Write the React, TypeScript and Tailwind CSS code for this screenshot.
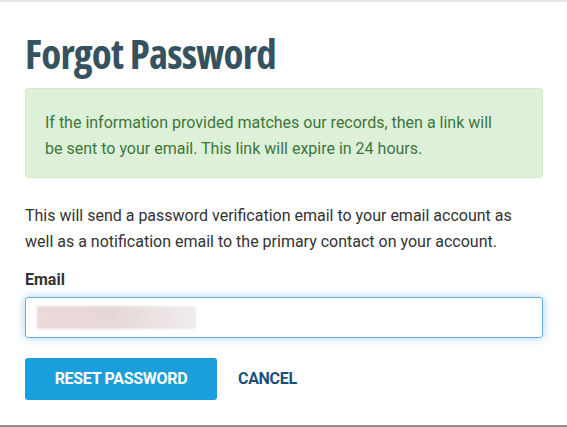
export default function App() {
  return (
    <div className="w-[567px] h-[427px] bg-white border-t-2 border-t-[#e3e5e6] border-b-2 border-b-[#8f8f8f] pl-[25px] pr-[24px] font-['Roboto',sans-serif]">
      <h1 className="mt-[27px] text-[41px] leading-[48px] font-bold tracking-[-0.8px] text-[#36525f] font-['Open_Sans',sans-serif] font-stretch-condensed">
        Forgot Password
      </h1>

      <div className="mt-[11px] h-[90px] rounded-[3px] border border-[#d3e8c5] bg-[#dff0d8] pl-[19px] pr-[30px] pt-[21px]">
        <p className="text-[16px] leading-[26px] text-[#3c763d]">
          If the information provided matches our records, then a link will be sent to your email. This link will expire in 24 hours.
        </p>
      </div>

      <p className="mt-[25px] pr-[10px] text-[16px] leading-[26px] text-[#333333]">
        This will send a password verification email to your email account as well as a notification email to the primary contact on your account.
      </p>

      <label className="block mt-[13px] text-[16px] leading-[24px] font-bold text-[#333333]">Email</label>

      <div className="mt-[5px] h-[41px] rounded-[3px] border border-[#66afe9] shadow-[0_0_8px_rgba(102,175,233,0.6)] px-[11px] flex items-center">
        <div className="w-[159px] h-[23px] bg-gradient-to-r from-[#ecd9d9] via-[#e6d8d8] to-[#f1eded] blur-[1px]" />
      </div>

      <div className="mt-[20px] flex items-center gap-[21px]">
        <button className="w-[192px] h-[42px] rounded-[3px] bg-[#1a9fda] text-white text-[16px] font-bold uppercase tracking-[-0.3px]">
          Reset Password
        </button>
        <button className="text-[16px] font-bold uppercase text-[#1d4f7c] tracking-[-0.3px]">
          Cancel
        </button>
      </div>
    </div>
  );
}
